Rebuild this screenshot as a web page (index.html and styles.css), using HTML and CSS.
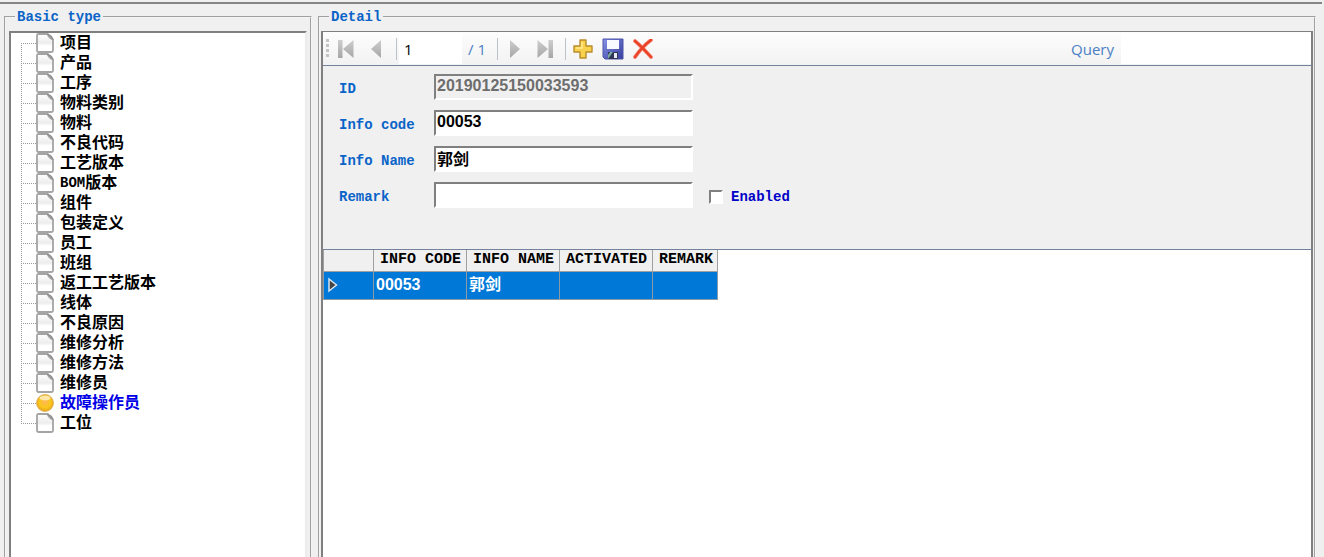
FILE: index.html
```html
<!DOCTYPE html>
<html lang="zh-CN">
<head>
<meta charset="utf-8">
<title>Basic type</title>
<link rel="stylesheet" href="styles.css">
</head>
<body>
<svg class="defs" aria-hidden="true">
  <defs>
    <linearGradient id="paper" x1="0" y1="0" x2="0" y2="1"><stop offset="0" stop-color="#fff"/><stop offset=".5" stop-color="#ededed"/><stop offset=".65" stop-color="#fff"/></linearGradient>
    <linearGradient id="grey" x1="0" y1="0" x2="0" y2="1"><stop offset="0" stop-color="#cecece"/><stop offset="1" stop-color="#a6a6a6"/></linearGradient>
    <linearGradient id="blue" x1="0" y1="0" x2="1" y2="1"><stop offset="0" stop-color="#8792e6"/><stop offset="1" stop-color="#343c9c"/></linearGradient>
    <radialGradient id="gold" cx=".5" cy=".45" r=".55"><stop offset="0" stop-color="#ffb65a"/><stop offset=".6" stop-color="#fbc81a"/><stop offset="1" stop-color="#e2a21c"/></radialGradient>
  </defs>
  <symbol id="page" viewBox="0 0 18 20"><path d="M2.500 1H11.500Q12.500 4.500 17 6.500V17.500Q17 19 15.500 19H2.500Q1 19 1 17.500V2.500Q1 1 2.500 1Z" fill="url(#paper)" stroke="#a4a4a4" stroke-width="1.800"/><path d="M11.500 1Q15 2.500 17 6.500" fill="none" stroke="#8f8f8f" stroke-width="1.500"/></symbol>
  <symbol id="ball" viewBox="0 0 18 20"><circle cx="9" cy="10" r="8.400" fill="url(#gold)" stroke="#dfae50"/><ellipse cx="9" cy="5" rx="5.500" ry="2.600" fill="#fff" opacity=".6"/></symbol>
</svg>
<main class="window">
  <fieldset class="group">
    <legend>Basic type</legend>
    <ul class="tree">
      <li><span class="branch"></span><button type="button"><svg><use href="#page"/></svg>项目</button></li>
      <li><span class="branch"></span><button type="button"><svg><use href="#page"/></svg>产品</button></li>
      <li><span class="branch"></span><button type="button"><svg><use href="#page"/></svg>工序</button></li>
      <li><span class="branch"></span><button type="button"><svg><use href="#page"/></svg>物料类别</button></li>
      <li><span class="branch"></span><button type="button"><svg><use href="#page"/></svg>物料</button></li>
      <li><span class="branch"></span><button type="button"><svg><use href="#page"/></svg>不良代码</button></li>
      <li><span class="branch"></span><button type="button"><svg><use href="#page"/></svg>工艺版本</button></li>
      <li><span class="branch"></span><button type="button"><svg><use href="#page"/></svg><span class="latin">BOM</span>版本</button></li>
      <li><span class="branch"></span><button type="button"><svg><use href="#page"/></svg>组件</button></li>
      <li><span class="branch"></span><button type="button"><svg><use href="#page"/></svg>包装定义</button></li>
      <li><span class="branch"></span><button type="button"><svg><use href="#page"/></svg>员工</button></li>
      <li><span class="branch"></span><button type="button"><svg><use href="#page"/></svg>班组</button></li>
      <li><span class="branch"></span><button type="button"><svg><use href="#page"/></svg>返工工艺版本</button></li>
      <li><span class="branch"></span><button type="button"><svg><use href="#page"/></svg>线体</button></li>
      <li><span class="branch"></span><button type="button"><svg><use href="#page"/></svg>不良原因</button></li>
      <li><span class="branch"></span><button type="button"><svg><use href="#page"/></svg>维修分析</button></li>
      <li><span class="branch"></span><button type="button"><svg><use href="#page"/></svg>维修方法</button></li>
      <li><span class="branch"></span><button type="button"><svg><use href="#page"/></svg>维修员</button></li>
      <li class="selected"><span class="branch"></span><button type="button"><svg><use href="#ball"/></svg>故障操作员</button></li>
      <li><span class="branch"></span><button type="button"><svg><use href="#page"/></svg>工位</button></li>
    </ul>
  </fieldset>

  <fieldset class="group">
    <legend>Detail</legend>
    <div class="detail">
      <div class="toolbar">
        <span class="grip"></span>
        <button type="button" aria-label="First"><svg width="18" height="20" viewBox="0 0 18 20"><path d="M1 1H5.500V19H1ZM16.500 1V19L6 10Z" fill="url(#grey)"/></svg></button>
        <button type="button" aria-label="Previous"><svg width="12" height="20" viewBox="0 0 12 20"><path d="M11 1V19L1 10Z" fill="url(#grey)"/></svg></button>
        <span class="separator"></span>
        <input class="position" type="text" value="1" aria-label="Position">
        <span class="count">/ 1</span>
        <span class="separator"></span>
        <button type="button" aria-label="Next"><svg width="12" height="20" viewBox="0 0 12 20"><path d="M1 1V19L11 10Z" fill="url(#grey)"/></svg></button>
        <button type="button" aria-label="Last"><svg width="18" height="20" viewBox="0 0 18 20"><path d="M1.500 1V19L12 10ZM12.500 1H17V19H12.500Z" fill="url(#grey)"/></svg></button>
        <span class="separator"></span>
        <button type="button" aria-label="Add"><svg width="20" height="20" viewBox="0 0 20 20"><path d="M7 1H13V7H19V13H13V19H7V13H1V7H7Z" fill="#f8d24c" stroke="#b98c2c" stroke-width="1.400" stroke-linejoin="round"/><path d="M9 3V9H3" fill="none" stroke="#ffe98e" stroke-width="1.500"/></svg></button>
        <button type="button" aria-label="Save"><svg width="22" height="22" viewBox="0 0 22 22"><path d="M1 1H21V21H3L1 19Z" fill="url(#blue)" stroke="#4a52a8"/><path d="M5 2H17V11H5Z" fill="#f7f9ff"/><path d="M6 14H16V21H6Z" fill="#303455"/><path d="M12 15H15V20H12Z" fill="#e8edf5"/><path d="M6 21L11 14H8L6 17Z" fill="#79a8a0"/></svg></button>
        <button type="button" aria-label="Delete"><svg width="20" height="20" viewBox="0 0 20 20"><path d="M2 2Q8 7 18 18M18 1Q9 8 2 18" fill="none" stroke="#f6a092" stroke-width="4" stroke-linecap="round"/><path d="M2 2Q8 7 18 18M18 1Q9 8 2 18" fill="none" stroke="#ea4226" stroke-width="2.600" stroke-linecap="round"/></svg></button>
        <label class="query" for="query">Query</label>
        <input class="search" id="query" type="text">
      </div>
      <form class="form">
        <label for="id">ID</label>
        <input class="field" id="id" type="text" value="20190125150033593" disabled>
        <label for="code">Info code</label>
        <input class="field" id="code" type="text" value="00053">
        <label for="name">Info Name</label>
        <input class="field" id="name" type="text" value="郭剑">
        <label for="remark">Remark</label>
        <input class="field" id="remark" type="text">
        <div class="check"><input id="enabled" type="checkbox"><label for="enabled">Enabled</label></div>
      </form>
      <table class="records">
        <colgroup><col class="marker"><col class="wide"><col class="wide"><col class="wide"><col class="narrow"></colgroup>
        <thead><tr><th></th><th>INFO CODE</th><th>INFO NAME</th><th>ACTIVATED</th><th>REMARK</th></tr></thead>
        <tbody><tr><td><svg width="12" height="16" viewBox="0 0 12 16"><path d="M2 2V14L9.500 8Z" fill="#444" stroke="#d6e4f0" stroke-width="1.500"/></svg></td><td>00053</td><td>郭剑</td><td></td><td></td></tr></tbody>
      </table>
    </div>
  </fieldset>
</main>
</body>
</html>
```
FILE: styles.css
```css
* { box-sizing: border-box; }

body {
  margin: 0;
  height: 100vh;
  overflow: hidden;
  padding: 2px 2px 0 0;
  background: #f0f0f0;
  color: #000;
  font: bold 16px "Liberation Sans", "Noto Sans CJK SC", sans-serif;
}

.defs { position: absolute; width: 0; height: 0; }

button, input { font: inherit; color: inherit; border: 0; }
button { background: none; padding: 0; }

.window {
  display: grid;
  grid-template-columns: 308px 1fr;
  gap: 6px;
  height: 100%;
  padding: 4px 6px 0 4px;
  border-top: 2px solid #858585;
}

.group {
  display: flex;
  min-width: 0;
  margin: 0 0 -8px;
  padding: 5px 1px 0 1px;
  border: 2px groove #f4f4f4;
}

.group legend {
  margin-left: 8px;
  padding: 0 2px;
  color: #0a64c8;
  font: bold 14px/18px "Liberation Mono", monospace;
}

.tree, .detail {
  flex: 1;
  min-width: 0;
  border: 2px solid #808080;
  border-bottom: 0;
  background: #fff;
}

.tree {
  margin: 0 2px;
  padding: 0 0 0 10px;
  border-right-color: #ececec;
  list-style: none;
}

.tree li { display: flex; height: 20px; }

.tree button {
  display: flex;
  align-items: center;
  line-height: 20px;
}

.tree svg { width: 18px; height: 20px; margin-right: 6px; }
.tree .latin { font: bold 14px "Liberation Mono", monospace; }
.selected { color: #0000e6; }

.branch {
  width: 15px;
  background:
    repeating-linear-gradient(to right, #999 0 1px, transparent 1px 2px) 0 10px / 100% 1px no-repeat,
    repeating-linear-gradient(to bottom, #999 0 1px, transparent 1px 2px) 0 0 / 1px 100% no-repeat;
}

.tree li:first-child .branch { background-size: 100% 1px, 1px 10px; background-position: 0 10px; }
.tree li:last-child .branch { background-size: 100% 1px, 1px 10px; }

.detail { border-top-width: 1px; }

.toolbar {
  display: flex;
  align-items: center;
  height: 34px;
  border-bottom: 1px solid #74839b;
  background: linear-gradient(#fdfdfd, #f2f2f2);
  font: 16px "Open Sans", sans-serif;
}

.toolbar button {
  display: grid;
  place-items: center;
  width: 30px;
  height: 30px;
}

.grip {
  width: 3px;
  height: 19px;
  margin: 0 2px 0 3px;
  background: repeating-linear-gradient(#c4c4c4 0 3px, transparent 3px 5px);
}

.separator {
  width: 1px;
  height: 22px;
  margin: 0 2px 0 5px;
  background: #bcc2ca;
}

.position, .search { height: 31px; background: #fff; }
.position { width: 63px; padding: 0 0 0 5px; font-size: 15px; }
.count { width: 30px; padding-left: 6px; white-space: nowrap; }
.count, .query { color: #4a7fc4; font-size: 15px; }
.query { margin: 0 7px 0 auto; }
.search { width: 190px; }

.form {
  display: grid;
  grid-template-columns: 95px 259px 1fr;
  grid-auto-rows: 26px;
  align-items: center;
  row-gap: 10px;
  padding: 8px 16px 41px;
  border-bottom: 1px solid #74839b;
  background: #f0f0f0;
}

.form label {
  grid-column: 1;
  padding-top: 4px;
  color: #0a64c8;
  font: bold 14px/18px "Liberation Mono", monospace;
}

.field {
  width: 100%;
  height: 26px;
  padding: 0 0 2px 1px;
  border: 2px solid #808080;
  border-right-color: #fff;
  border-bottom-color: #fff;
  background: #fff;
}

.field:disabled { background: #f0f0f0; color: #6d6d6d; }

.check {
  display: flex;
  align-items: center;
  gap: 8px;
  padding: 4px 0 0 16px;
}

.check input {
  appearance: none;
  width: 14px;
  height: 14px;
  margin: 0;
  border: 2px solid #808080;
  border-right-color: #fff;
  border-bottom-color: #fff;
  background: #fff;
}

.check input:checked { background: #0000c8; }

.check label { padding: 0; color: #0000c8; }

.records {
  width: 394px;
  table-layout: fixed;
  border-collapse: collapse;
}

.marker { width: 50px; }
.wide { width: 93px; }
.narrow { width: 65px; }

.records th {
  height: 21px;
  padding: 0 0 0 6px;
  border: 1px solid #a0a0a0;
  border-top: 0;
  background: #f0f0f0;
  font: bold 15px/18px "Liberation Mono", monospace;
  text-align: left;
  white-space: nowrap;
}

.records td {
  height: 28px;
  padding: 0 0 0 2px;
  border: 1px solid #8c9aa6;
  background: #0078d7;
  color: #fff;
  line-height: 20px;
}

.records td svg { display: block; margin-left: 1px; }
```
